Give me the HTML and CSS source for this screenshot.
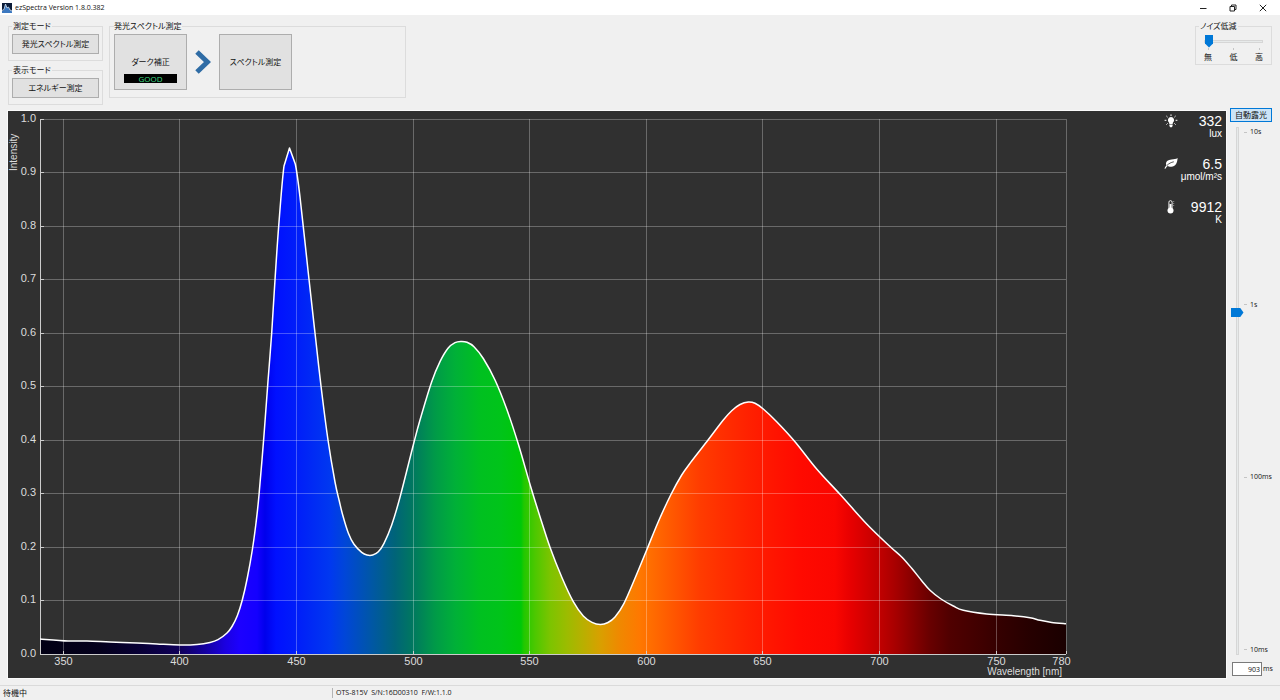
FILE: index.html
```html
<!DOCTYPE html>
<html lang="ja">
<head>
  <meta charset="UTF-8">
  <meta name="viewport" content="width=device-width, initial-scale=1.0">
  <title>ezSpectra Version 1.8.0.382</title>
  <link rel="stylesheet" href="styles.css">
</head>
<body>
  <!-- Title bar -->
  <header class="titlebar">
    <svg class="logo" viewBox="0 0 10 10" aria-hidden="true">
      <rect width="10" height="10" fill="#0c1c38"/>
      <path d="M0 8 L2 7 L3.500 1.500 L5 5 L6.500 4 L8 7 L10 8 V10 H0 Z" fill="#3c78c0"/>
      <path d="M0 7.500 L2 6.500 L3.500 1 L5 5 L6.500 4 L8 7 L10 8" fill="none" stroke="#d8e8f8" stroke-width="0.800"/>
    </svg>
    <span class="app-name">ezSpectra Version 1.8.0.382</span>
    <div class="window-buttons">
      <button type="button" aria-label="最小化"><svg viewBox="0 0 8 8"><path d="M1 4.500 H7.500"/></svg></button>
      <button type="button" aria-label="元に戻す"><svg viewBox="0 0 8 8"><path d="M1 2.500 H5.500 V7 H1 Z M2.500 2.500 V1 H7 V5.500 H5.500"/></svg></button>
      <button type="button" aria-label="閉じる"><svg viewBox="0 0 8 8"><path d="M0.800 0.800 L7.200 7.200 M7.200 0.800 L0.800 7.200"/></svg></button>
    </div>
  </header>

  <!-- Toolbar -->
  <div class="toolbar">
    <div class="modes">
      <fieldset class="group">
        <legend>測定モード</legend>
        <button type="button" class="btn mode-btn">発光スペクトル測定</button>
      </fieldset>
      <fieldset class="group">
        <legend>表示モード</legend>
        <button type="button" class="btn mode-btn">エネルギー測定</button>
      </fieldset>
    </div>

    <fieldset class="group measure">
      <legend>発光スペクトル測定</legend>
      <div class="steps">
        <button type="button" class="btn step-btn">ダーク補正<span class="badge">GOOD</span></button>
        <svg class="chevron" viewBox="0 0 16 24" aria-hidden="true">
          <path d="M2 2 L12.500 12 L2 22" fill="none" stroke="#2f6ca5" stroke-width="5"/>
        </svg>
        <button type="button" class="btn step-btn">スペクトル測定</button>
      </div>
    </fieldset>

    <fieldset class="group noise">
      <legend>ノイズ低減</legend>
      <div class="noise-scale">
        <input type="range" class="noise-slider" min="0" max="2" value="0" aria-label="ノイズ低減">
        <div class="noise-labels"><span>無</span><span>低</span><span>高</span></div>
      </div>
    </fieldset>
  </div>

  <main class="main">
    <section class="panel">
      <svg class="chart" viewBox="8 111 1218 567" role="img" aria-label="Intensity / Wavelength">
        <defs>
          <linearGradient id="spectrum" gradientUnits="userSpaceOnUse" x1="40" x2="1066" y1="0" y2="0"></linearGradient>
        </defs>
        <path id="area" fill="url(#spectrum)"/>
        <g id="grid" class="grid"></g>
        <path class="axis" d="M40.500 119 V654.500 H1066"/>
        <g id="ticks" class="axis"></g>
        <path id="curve" class="curve"/>
        <g id="y-labels" class="y-labels"></g>
        <g id="x-labels" class="x-labels"></g>
        <text class="axis-name" transform="translate(17 171) rotate(-90)">Intensity</text>
        <text class="axis-name x-name" x="1062" y="675">Wavelength [nm]</text>
      </svg>

      <div class="readouts">
        <div class="readout">
          <svg viewBox="0 0 14 14" aria-hidden="true">
            <path d="M7 3 A3.200 3.200 0 0 1 9 8.600 L8.600 10 H5.400 L5 8.600 A3.200 3.200 0 0 1 7 3 Z M5.400 10.600 H8.600 V12 L7.800 13.200 H6.200 L5.400 12 Z" fill="#fff"/>
            <path d="M7 0.400 V2 M2.400 2 L3.600 3.200 M11.600 2 L10.400 3.200 M0.600 6.300 H2.400 M13.400 6.300 H11.600 M2.400 10.600 L3.600 9.400 M11.600 10.600 L10.400 9.400" stroke="#fff" fill="none"/>
          </svg>
          <div class="value">332<span class="unit">lux</span></div>
        </div>
        <div class="readout">
          <svg viewBox="0 0 14 14" aria-hidden="true">
            <path d="M13.600 1 C13.400 6 11.400 9.600 7.400 9.800 C5.600 9.900 4.400 9.500 3.600 9 C2.800 9.700 2 10.600 1.400 11.800 L0.400 11.400 C1 10 1.600 9 2.400 8.200 C0.800 4.600 4.200 2.600 7.500 2.400 C10 2.200 12 2.100 13.600 1 Z" fill="#fff"/>
            <path d="M2.800 8.600 C5 6.400 7 5.400 9.800 4.800" fill="none" stroke="#303030" stroke-width="0.800"/>
          </svg>
          <div class="value">6.5<span class="unit">μmol/m²s</span></div>
        </div>
        <div class="readout">
          <svg viewBox="0 0 14 14" aria-hidden="true">
            <path d="M4.900 8 V2.200 A1.600 1.600 0 0 1 8.100 2.200 V8" fill="none" stroke="#fff" stroke-width="0.900"/>
            <circle cx="6.500" cy="10.500" r="3" fill="#fff"/>
            <path d="M6.500 4 V10" stroke="#fff" stroke-width="2"/>
            <path d="M9.200 1.500 H10.200 M9.200 3.500 H10.200 M9.200 5.500 H10.200" stroke="#aaa" stroke-width="0.800"/>
          </svg>
          <div class="value">9912<span class="unit">K</span></div>
        </div>
      </div>
    </section>

    <!-- Exposure -->
    <aside class="exposure">
      <button type="button" class="auto-btn">自動露光</button>
      <div class="exposure-scale">
        <!-- log10 of the exposure time in ms -->
        <input type="range" class="exposure-slider" min="1" max="4" step="0.001" value="2.956" aria-label="露光時間">
        <div class="exposure-labels"><span>10s</span><span>1s</span><span>100ms</span><span>10ms</span></div>
      </div>
      <label class="exposure-time"><input type="text" value="903">ms</label>
    </aside>
  </main>

  <footer class="statusbar">
    <span class="state">待機中</span>
    <span class="device">OTS-815V&nbsp; S/N:16D00310&nbsp; F/W:1.1.0</span>
  </footer>

  <script src="chart.js"></script>
</body>
</html>
```

FILE: styles.css
```css
* {
  box-sizing: border-box;
}
body {
  margin: 0;
  min-height: 100vh;
  display: flex;
  flex-direction: column;
  background: #f0f0f0;
  color: #111;
  font-family: "Open Sans", "Noto Sans CJK JP", sans-serif;
  font-size: 8px;
  line-height: 10px;
}
button, input {
  font: inherit;
  color: inherit;
  margin: 0;
}

/* Title bar */
.titlebar {
  display: flex;
  align-items: center;
  height: 15px;
  padding-left: 2px;
  background: #fff;
}
.logo {
  width: 10px;
  height: 10px;
  margin-right: 3px;
}
.app-name {
  font-size: 7px;
}
.window-buttons {
  display: flex;
  margin-left: auto;
  padding-right: 2px;
}
.window-buttons button {
  width: 30px;
  height: 15px;
  padding: 0;
  border: none;
  background: none;
}
.window-buttons svg {
  display: block;
  width: 8px;
  height: 8px;
  margin: 0 auto;
  fill: none;
  stroke: #222;
}

/* Toolbar */
.toolbar {
  display: flex;
  align-items: flex-start;
  gap: 6px;
  padding: 6px 8px 2px;
  font-family: "Noto Sans CJK JP", sans-serif;
  font-feature-settings: "palt";
}
.modes {
  display: flex;
  flex-direction: column;
  gap: 4px;
}
.group {
  min-width: 0;
  margin: 0;
  padding: 3px 3px 6px;
  border: 1px solid #dcdcdc;
}
.group legend {
  padding: 0 1px;
}
.btn {
  background: #e1e1e1;
  border: 1px solid #adadad;
  padding: 0;
}
.mode-btn {
  display: block;
  width: 87px;
  height: 20px;
}
.measure {
  width: 297px;
  padding: 3px 4px 7px;
}
.measure legend {
  padding: 0;
}
.steps {
  display: flex;
  align-items: center;
}
.step-btn {
  display: flex;
  flex-direction: column;
  align-items: center;
  justify-content: center;
  position: relative;
  width: 73px;
  height: 56px;
}
.badge {
  position: absolute;
  left: 9px;
  right: 9px;
  bottom: 6px;
  height: 9px;
  background: #000;
  color: #3fdc84;
  font-family: "Open Sans", sans-serif;
  line-height: 9px;
}
.chevron {
  width: 16px;
  height: 24px;
  margin: 0 8px;
}
.noise {
  width: 77px;
  margin-left: auto;
  padding: 3px 3px 2px;
}
.noise-scale {
  padding: 0 5px;
}
.noise-slider, .exposure-slider {
  appearance: none;
  background: transparent;
}
.noise-slider {
  display: block;
  width: 100%;
  height: 14px;
}
.noise-slider::-webkit-slider-runnable-track {
  height: 3px;
  background: #e7eaea;
  border: 1px solid #d6d6d6;
}
.noise-slider::-webkit-slider-thumb {
  appearance: none;
  width: 8px;
  height: 13px;
  margin-top: -6px;
  background: #0078d7;
  clip-path: polygon(0 0, 100% 0, 100% 70%, 50% 100%, 0 70%);
}
.noise-labels {
  display: flex;
  justify-content: space-between;
}
.noise-labels span::before {
  content: "";
  display: block;
  width: 1px;
  height: 2px;
  margin: 0 auto 2px;
  background: #c4c4c4;
}

/* Chart */
.main {
  display: flex;
  flex: 1;
  margin-bottom: 7px;
}
.panel {
  flex: 1;
  position: relative;
  min-width: 0;
  margin: 4px 0 0 8px;
  background: #303030;
  box-shadow: 0 0 0 1px #fafafa;
  font-family: "Liberation Sans", sans-serif;
}
.chart {
  display: block;
  width: 100%;
}
.chart text {
  fill: #dcdcdc;
  font-size: 11px;
}
.grid {
  stroke: #fff;
  stroke-opacity: 0.28;
}
.axis {
  fill: none;
  stroke: #ccc;
}
.curve {
  fill: none;
  stroke: #fff;
  stroke-width: 1.5;
  stroke-linejoin: round;
}
.y-labels {
  text-anchor: end;
}
.x-labels {
  text-anchor: middle;
}
.chart .axis-name {
  font-size: 10px;
}
.chart .x-name {
  text-anchor: end;
}

/* Readings laid over the top right of the chart */
.readouts {
  display: flex;
  flex-direction: column;
  gap: 18px;
  position: absolute;
  top: 3px;
  right: 4px;
  width: 58px;
}
.readout {
  display: flex;
  justify-content: space-between;
  color: #fff;
}
.readout svg {
  flex: none;
  width: 14px;
  height: 14px;
}
.value {
  display: flex;
  flex-direction: column;
  align-items: flex-end;
  width: 44px;
  font-size: 14px;
  line-height: 14px;
}
.unit {
  font-size: 10px;
  line-height: 11px;
}

/* Exposure */
.exposure {
  display: flex;
  flex-direction: column;
  width: 54px;
  padding: 1px 0 1px 4px;
}
.auto-btn {
  width: 42px;
  height: 14px;
  padding: 0;
  border: 1px solid #0078d7;
  background: #cce4f7;
}
.exposure-scale {
  display: flex;
  flex: 1;
  margin: 5px 0 7px;
}
.exposure-slider {
  writing-mode: vertical-lr;
  direction: rtl;
  width: 14px;
}
.exposure-slider::-webkit-slider-runnable-track {
  width: 3px;
  background: #e7eaea;
  border: 1px solid #d6d6d6;
}
.exposure-slider::-webkit-slider-thumb {
  appearance: none;
  width: 13px;
  height: 9px;
  margin-left: -6px;
  background: #0078d7;
  clip-path: polygon(0 0, 75% 0, 100% 50%, 75% 100%, 0 100%);
}
.exposure-labels {
  display: flex;
  flex-direction: column;
  justify-content: space-between;
  font-size: 7px;
}
.exposure-labels span {
  display: flex;
  align-items: center;
  gap: 3px;
}
.exposure-labels span::before {
  content: "";
  width: 3px;
  height: 1px;
  background: #c4c4c4;
}
.exposure-time {
  display: flex;
  align-items: center;
  gap: 1px;
  padding: 0 0 1px 2px;
  font-size: 7px;
}
.exposure-time input {
  width: 30px;
  height: 14px;
  padding: 0 1px;
  border: 1px solid #7a7a7a;
  background: #fff;
  text-align: right;
}

/* Status bar */
.statusbar {
  display: flex;
  align-items: center;
  height: 15px;
  border-top: 1px solid #dadada;
}
.state {
  width: 332px;
  padding-left: 3px;
}
.device {
  padding-left: 3px;
  border-left: 1px solid #b4b4b4;
  font-size: 7px;
}
```

FILE: chart.js
```js
const SVG_NS = 'http://www.w3.org/2000/svg';
const LEFT = 40, RIGHT = 1066, TOP = 119.5, BOTTOM = 654;

const xAt = nm => LEFT + (nm - 340) / 440 * (RIGHT - LEFT);
const yAt = v => BOTTOM - v * (BOTTOM - TOP);

function add(parentId, name, attrs, text) {
  const el = document.createElementNS(SVG_NS, name);
  for (const key in attrs) el.setAttribute(key, attrs[key]);
  if (text) el.textContent = text;
  document.getElementById(parentId).appendChild(el);
}

// Fill colours, by x position on the wavelength axis
const colours = [
  [40, '#020014'], [100, '#04001c'], [137, '#080034'], [180, '#10005a'],
  [205, '#1400a0'], [225, '#1b00e0'], [240, '#1c00ff'], [257, '#1400ff'],
  [265, '#0000ec'], [276, '#0010ff'], [300, '#0020f8'], [330, '#0038f0'],
  [345, '#0046d8'], [370, '#0056a8'], [395, '#006478'], [413, '#00785f'],
  [435, '#009a48'], [455, '#00b038'], [480, '#00c020'], [500, '#00c41a'],
  [521, '#00c808'], [524, '#22c800'], [535, '#4cc800'], [550, '#7cc400'],
  [567, '#9cbc00'], [585, '#bcae00'], [600, '#d8a000'], [620, '#f08800'],
  [640, '#ff7800'], [660, '#ff6400'], [680, '#ff5000'], [700, '#ff3c00'],
  [720, '#ff3000'], [750, '#ff2000'], [775, '#ff1400'], [800, '#ff0a00'],
  [835, '#fa0600'], [850, '#e80000'], [880, '#c00000'], [895, '#a80000'],
  [910, '#8c0000'], [930, '#680000'], [950, '#500000'], [980, '#400000'],
  [1000, '#340000'], [1030, '#260000'], [1066, '#1a0000']
];
colours.forEach(([x, colour]) => {
  add('spectrum', 'stop', { offset: (x - LEFT) / (RIGHT - LEFT), 'stop-color': colour });
});

// Measured curve
const points = [
  [40, 639], [68, 641], [87, 641], [110, 642], [137, 643], [157, 644], [180, 645],
  [197, 644.5], [210, 642.5], [218, 639.7], [227, 633], [232, 626.5], [237.3, 615.7],
  [242.3, 600], [247.3, 578], [252.3, 550], [256, 523], [259, 495], [264, 435],
  [268, 381], [271.7, 333], [275, 280], [278.7, 226], [284, 166], [289.5, 148],
  [295.3, 164], [300, 197], [308.3, 273], [315, 333], [321, 386],
  [328, 440], [335, 482], [339.3, 501], [342.7, 515], [348.3, 533], [354, 544.3],
  [361.7, 552.3], [367, 555], [372.7, 555], [378.3, 551.7], [384, 543.3], [391.7, 525],
  [400, 497.3], [413.3, 445], [420, 420], [431.7, 381.7], [440, 361.7], [448, 348.3],
  [455, 342.7], [461, 341.5], [467, 342.3], [474, 346.7], [483.3, 358.5], [495, 380],
  [506.7, 409], [518.3, 444], [530.7, 486.7], [540, 516.7], [550, 547.3], [561.7, 577],
  [573.3, 601.7], [583.3, 616], [592, 622.3], [600.3, 624.5], [608, 622.5], [615, 617],
  [624, 603.3], [635, 578.3], [646.7, 550], [658.3, 521.7], [670.7, 495], [681.7, 475],
  [691.7, 461], [706.7, 441.7], [723.3, 420], [731.7, 410.7], [740, 404.5], [748.3, 402],
  [755, 403.3], [763.3, 409], [776.7, 421.7], [795, 441.7], [816.7, 469], [840, 494.3],
  [866.7, 524], [890, 546.5], [901.7, 557], [911.7, 568.3], [921.7, 580.7], [930, 590.3],
  [941, 599], [953.3, 606], [963.3, 610.3], [986.7, 614], [1013.3, 615.7], [1030, 617.7],
  [1040, 620.3], [1051.7, 622.5], [1066, 623.7]
];

const PEAK_Y = 148;

function smoothPath(p) {
  let d = `M${p[0][0]} ${p[0][1]}`;
  for (let i = 0; i < p.length - 1; i++) {
    const a = p[Math.max(i - 1, 0)], b = p[i], c = p[i + 1], e = p[Math.min(i + 2, p.length - 1)];
    if (b[1] === PEAK_Y || c[1] === PEAK_Y) {
      d += ` L${c[0]} ${c[1]}`;
      continue;
    }
    d += ` C${b[0] + (c[0] - a[0]) / 6} ${b[1] + (c[1] - a[1]) / 6}`
       + ` ${c[0] - (e[0] - b[0]) / 6} ${c[1] - (e[1] - b[1]) / 6} ${c[0]} ${c[1]}`;
  }
  return d;
}

const curve = smoothPath(points);
document.getElementById('curve').setAttribute('d', curve);
document.getElementById('area').setAttribute('d', `${curve} V${BOTTOM} H${LEFT} Z`);

// Grid, ticks and axis labels
for (let i = 0; i <= 10; i++) {
  const y = Math.floor(yAt(i / 10)) + 0.5;
  if (i > 0) add('grid', 'path', { d: `M${LEFT} ${y} H${RIGHT}` });
  add('ticks', 'path', { d: `M${LEFT} ${y} h4` });
  add('y-labels', 'text', { x: 36, y: y + 2.5 }, (i / 10).toFixed(1));
}
[350, 400, 450, 500, 550, 600, 650, 700, 750, 780].forEach(nm => {
  const x = Math.floor(xAt(nm)) + 0.5;
  add('grid', 'path', { d: `M${x} 119 V${BOTTOM}` });
  add('ticks', 'path', { d: `M${x} ${BOTTOM} v-3` });
  add('x-labels', 'text', { x: nm === 780 ? x - 5 : x, y: 665 }, String(nm));
});
```
